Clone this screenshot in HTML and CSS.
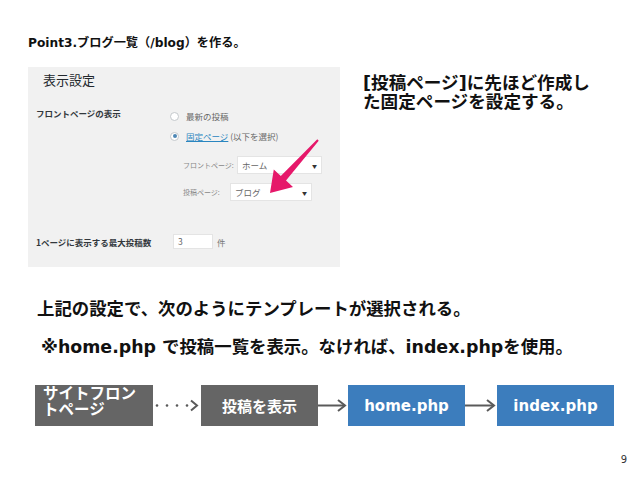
FILE: index.html
```html
<!DOCTYPE html>
<html>
    <head>
        <meta charset="utf-8">
        <title>Point3</title>
        <link rel="stylesheet" href="styles.css">
    </head>
    <body>
        <div class="slide">
            <p class="title">Point3.ブログ一覧（/blog）を作る。</p>

            <div class="top">
                <!-- settings screenshot -->
                <div class="shot">
                    <p class="shot-head">表示設定</p>
                    <div class="setting">
                        <div class="th">フロントページの表示</div>
                        <div class="td">
                            <div class="radio-row"><span class="radio"></span>最新の投稿</div>
                            <div class="radio-row"><span class="radio on"></span><span><span class="link">固定ページ</span> (以下を選択)</span></div>
                            <div class="sel-row front"><span class="lbl">フロントページ:</span><span class="select">ホーム<i>▼</i></span></div>
                            <div class="sel-row posts"><span class="lbl">投稿ページ:</span><span class="select">ブログ<i>▼</i></span></div>
                        </div>
                    </div>
                    <div class="setting count">
                        <div class="th">1ページに表示する最大投稿数</div>
                        <div class="td"><span class="num">3</span><span class="unit">件</span></div>
                    </div>
                    <svg class="pointer" width="312" height="200" viewBox="0 0 312 200">
                        <polygon points="289.3,72.3 252.8,108.9 245.8,102.5 242,126 265,119.9 258,113.5 290.7,73.7" fill="#e6186a"/>
                    </svg>
                </div>
                <p class="note">[投稿ページ]に先ほど作成し<br>た固定ページを設定する。</p>
            </div>

            <p class="lead">上記の設定で、次のようにテンプレートが選択される。</p>
            <p class="sub">※home.php で投稿一覧を表示。なければ、index.phpを使用。</p>

            <div class="flow">
                <div class="box gray first"><span>サイトフロン</span><span>トページ</span></div>
                <svg class="link-arrow" width="48" height="41" viewBox="0 0 48 41">
                    <circle cx="4" cy="20.5" r="1.3" fill="#5a5a5a"/>
                    <circle cx="14" cy="20.5" r="1.3" fill="#5a5a5a"/>
                    <circle cx="24" cy="20.5" r="1.3" fill="#5a5a5a"/>
                    <circle cx="34" cy="20.5" r="1.3" fill="#5a5a5a"/>
                    <polyline points="38,15.5 44,20.5 38,25.5" fill="none" stroke="#5a5a5a" stroke-width="2"/>
                </svg>
                <div class="box gray">投稿を表示</div>
                <svg class="link-arrow" width="30" height="41" viewBox="0 0 30 41">
                    <line x1="0" y1="20.5" x2="27" y2="20.5" stroke="#5a5a5a" stroke-width="2"/>
                    <polyline points="20,15 27,20.5 20,26" fill="none" stroke="#5a5a5a" stroke-width="2"/>
                </svg>
                <div class="box blue">home.php</div>
                <svg class="link-arrow" width="32" height="41" viewBox="0 0 32 41">
                    <line x1="0" y1="20.5" x2="29" y2="20.5" stroke="#5a5a5a" stroke-width="2"/>
                    <polyline points="22,15 29,20.5 22,26" fill="none" stroke="#5a5a5a" stroke-width="2"/>
                </svg>
                <div class="box blue">index.php</div>
            </div>

            <p class="page">9</p>
        </div>
    </body>
</html>
```

FILE: styles.css
```css
body {
    margin: 0;
    background-color: #fff;
    color: #111;
    font-family: "DejaVu Sans", "Noto Sans CJK JP", sans-serif;
}
.slide {
    width: 638px;
    height: 479px;
    overflow: hidden;
}
.title {
    margin: 35px 0 0 28px;
    font-size: 12.2px;
    line-height: 16px;
    font-weight: bold;
}
.top {
    display: flex;
    margin-top: 16px;
    padding-left: 28px;
}
/* screenshot of the reading settings */
.shot {
    position: relative;
    flex-shrink: 0;
    width: 312px;
    height: 200px;
    background-color: #f1f1f1;
    font-family: "Noto Sans CJK JP", sans-serif;
}
.shot-head {
    margin: 0;
    padding: 4px 0 0 15px;
    font-size: 13px;
    line-height: 18px;
    color: #23282d;
}
.setting {
    display: grid;
    grid-template-columns: 134px 1fr;
    padding-left: 8px;
    margin-top: 17px;
}
.th {
    font-size: 8.5px;
    line-height: 14px;
    font-weight: bold;
    color: #32373c;
}
.radio-row {
    display: flex;
    align-items: center;
    gap: 7px;
    height: 20px;
    font-size: 8.5px;
    color: #666;
}
.radio {
    width: 9px;
    height: 9px;
    box-sizing: border-box;
    border: 1px solid #c4c8cc;
    border-radius: 50%;
    background-color: #fff;
    display: flex;
    align-items: center;
    justify-content: center;
}
.radio.on::after {
    content: "";
    width: 4px;
    height: 4px;
    border-radius: 50%;
    background-color: #4d87b5;
}
.link {
    color: #2a86c0;
    text-decoration: underline;
}
.sel-row {
    display: flex;
    align-items: center;
    padding-left: 13px;
    font-size: 7px;
    color: #888;
    white-space: nowrap;
}
.front {
    margin-top: 10px;
}
.posts {
    margin-top: 9px;
}
.lbl {
    flex-shrink: 0;
}
.front .lbl {
    width: 54px;
}
.posts .lbl {
    width: 47px;
}
.select {
    flex-shrink: 0;
    display: flex;
    align-items: center;
    justify-content: space-between;
    height: 18px;
    box-sizing: border-box;
    padding: 0 4px;
    background-color: #fff;
    border: 1px solid #e4e4e4;
    font-size: 8.5px;
    color: #666;
}
.front .select {
    width: 85px;
}
.posts .select {
    width: 82px;
}
.select i {
    font-style: normal;
    font-size: 5px;
    color: #333;
}
.count {
    margin-top: 33px;
    align-items: center;
}
.count .td {
    display: flex;
    align-items: center;
}
.num {
    width: 40px;
    height: 15px;
    box-sizing: border-box;
    margin-left: 3px;
    padding-left: 4px;
    background-color: #fff;
    border: 1px solid #e4e4e4;
    font-size: 8.5px;
    line-height: 13px;
    color: #666;
}
.unit {
    margin-left: 4px;
    font-size: 8.5px;
    color: #777;
}
.pointer {
    position: absolute;
    left: 0;
    top: 0;
}
.note {
    margin: 7px 0 0 23px;
    font-size: 17.6px;
    line-height: 19px;
    font-weight: bold;
    white-space: nowrap;
}
.lead {
    margin: 31px 0 0 37px;
    font-size: 17.4px;
    line-height: 22px;
    font-weight: bold;
}
.sub {
    margin: 16px 0 0 41px;
    font-size: 17.4px;
    line-height: 22px;
    font-weight: bold;
}
/* template order */
.flow {
    display: flex;
    margin: 27px 0 0 35px;
    height: 41px;
}
.box {
    width: 117px;
    height: 41px;
    box-sizing: border-box;
    display: flex;
    align-items: center;
    justify-content: center;
    color: #fff;
    font-size: 15px;
    font-weight: bold;
}
.box.first {
    width: 118px;
    flex-direction: column;
    align-items: flex-start;
    justify-content: flex-start;
    padding: 1px 0 0 8px;
    font-size: 15.5px;
}
.box.first span {
    display: block;
    height: 16px;
    line-height: 16px;
}
.gray {
    background-color: #656565;
}
.blue {
    background-color: #3c7dbd;
}
.link-arrow {
    display: block;
}
.page {
    margin: 28px 11px 0 0;
    text-align: right;
    font-size: 10px;
    line-height: 12px;
    color: #333;
}
```
